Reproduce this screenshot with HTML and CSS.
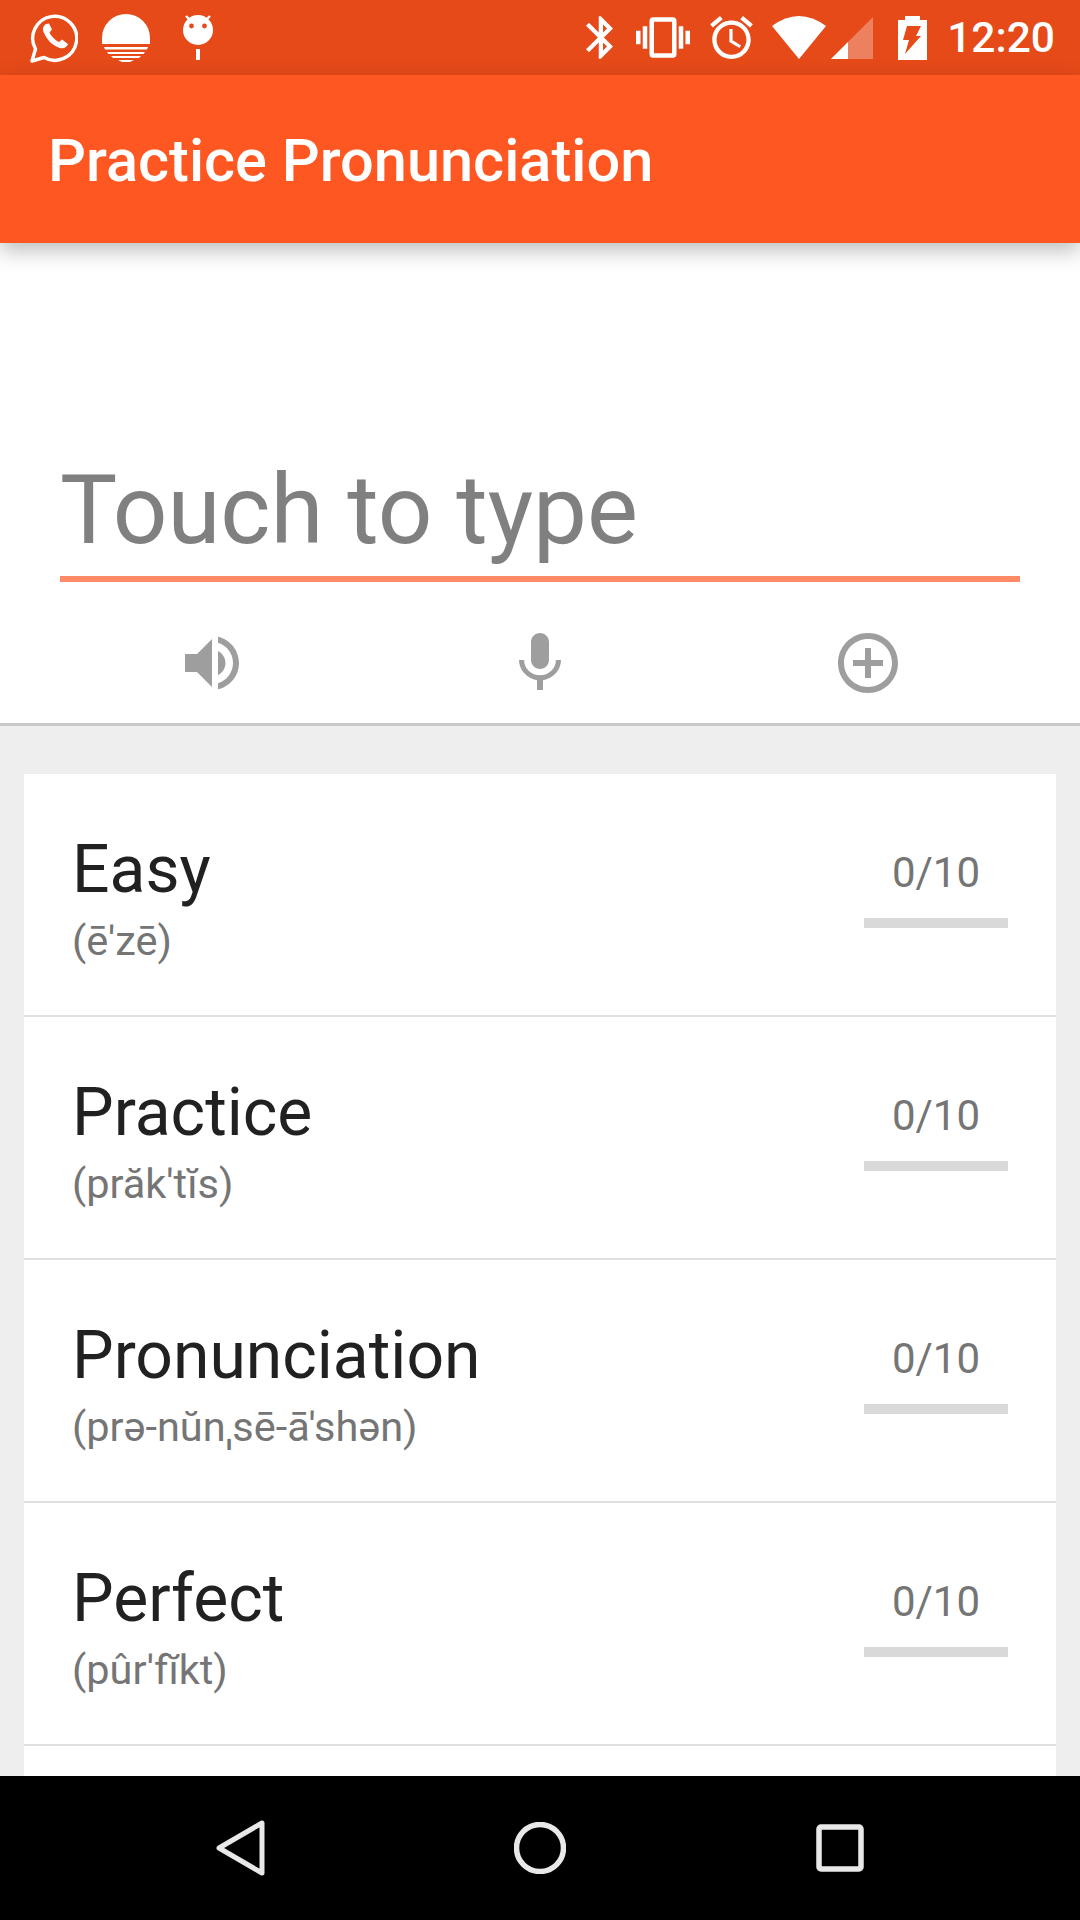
FILE: index.html
```html
<!DOCTYPE html>
<html lang="en">
<head>
<meta charset="utf-8">
<title>Practice Pronunciation</title>
<link rel="stylesheet" href="styles.css">
</head>
<body>
<div class="screen">
  <header class="status">
    <div class="status-left">
      <svg class="ic-wa" viewBox="0 0 48 51"><path d="M2 49 L5.5 37 A22 22 0 1 1 14 45.5 Z" fill="none" stroke="#fff" stroke-width="3.4" stroke-linejoin="round"/><path d="M16 12 C13 14 12 17 14 21 C17 28 23 34 30 36 C34 37 37 35 38 32 L32 27.5 L29 30 C25 28 21 24 19.5 20.5 L22 17.5 L19 11.5 Z" fill="#fff"/></svg>
      <svg class="ic-sun" viewBox="0 0 48 48"><path d="M0 24 A24 24 0 0 1 48 24 V30 H0 Z" fill="#fff"/><path d="M2 33 H46 L45 35.5 H3 Z M5 38 H43 L41.5 40 H6.5 Z M9 42 H39 L37 44 H11 Z M16 46 H32 L28 48 H20 Z" fill="#fff"/></svg>
      <svg class="ic-droid" viewBox="0 0 30 45"><path d="M3 1 L7 5 M27 1 L23 5" stroke="#fff" stroke-width="2.4"/><circle cx="15" cy="15" r="15" fill="#fff"/><circle cx="8.5" cy="11" r="2.4" fill="#e64a19"/><circle cx="21.5" cy="11" r="2.4" fill="#e64a19"/><rect x="13" y="34" width="4" height="11" fill="#fff"/></svg>
    </div>
    <div class="status-right">
      <svg class="ic-bt" viewBox="5 2 12.71 20"><path fill="#fff" d="M17.71 7.71L12 2h-1v7.59L6.41 5 5 6.41 10.59 12 5 17.59 6.41 19 11 14.41V22h1l5.71-5.71-4.3-4.29 4.3-4.29zM13 5.83l1.88 1.88L13 9.59V5.83zm1.88 10.46L13 18.17v-3.76l1.88 1.88z"/></svg>
      <svg class="ic-vib" viewBox="0 3 24 18"><path fill="#fff" d="M0 15h2V9H0v6zm3 2h2V7H3v10zm19-8v6h2V9h-2zm-3 8h2V7h-2v10zM16.5 3h-9C6.67 3 6 3.67 6 4.5v15c0 .83.67 1.5 1.5 1.5h9c.83 0 1.5-.67 1.5-1.5v-15c0-.83-.67-1.5-1.5-1.5zM16 19H8V5h8v14z"/></svg>
      <svg class="ic-alarm" viewBox="2 1.86 20 20.14"><path fill="#fff" d="M22 5.72l-4.6-3.86-1.29 1.53 4.6 3.86L22 5.72zM7.88 3.39L6.6 1.86 2 5.71l1.29 1.53 4.59-3.85zM12.5 8H11v6l4.75 2.85.75-1.23-4-2.37V8zM12 4c-4.97 0-9 4.03-9 9s4.03 9 9 9 9-4.03 9-9-4.03-9-9-9zm0 16c-3.87 0-7-3.13-7-7s3.13-7 7-7 7 3.13 7 7-3.13 7-7 7z"/></svg>
      <svg class="ic-wifi" viewBox="0 0 54 43"><path fill="#fff" d="M0 10 Q27 -10 54 10 L27 43 Z"/></svg>
      <svg class="ic-sig" viewBox="0 0 42 42"><path fill="#fff" fill-opacity=".3" d="M0 42 L42 0 V42 Z"/><path fill="#fff" d="M0 42 L17 25 V42 Z"/></svg>
      <svg class="ic-bat" viewBox="0 0 29 44"><path fill="#fff" d="M7 0 H22 V4 H29 V44 H0 V4 H7 Z"/><path fill="#e64a19" d="M9 10 H23 L18 20 H23 L7 38 L11 24 H5 Z"/></svg>
      <span class="clock">12:20</span>
    </div>
  </header>
  <div class="appbar">Practice Pronunciation</div>
  <section class="input-panel">
    <div class="field">Touch to type</div>
    <div class="tools">
      <div class="tool"><svg class="tool-ic" viewBox="0 0 24 24"><path d="M3 9v6h4l5 5V4L7 9H3zm13.5 3c0-1.77-1.02-3.29-2.5-4.03v8.05c1.48-.73 2.5-2.25 2.5-4.02zM14 3.23v2.06c2.89.86 5 3.54 5 6.71s-2.11 5.85-5 6.71v2.06c4.01-.91 7-4.49 7-8.77s-2.99-7.86-7-8.77z"/></svg></div>
      <div class="tool"><svg class="tool-ic" viewBox="0 0 24 24"><path d="M12 14c1.66 0 2.99-1.34 2.99-3L15 5c0-1.66-1.34-3-3-3S9 3.34 9 5v6c0 1.66 1.34 3 3 3zm5.3-3c0 3-2.54 5.1-5.3 5.1S6.7 14 6.7 11H5c0 3.41 2.72 6.23 6 6.72V21h2v-3.28c3.28-.48 6-3.3 6-6.72h-1.7z"/></svg></div>
      <div class="tool"><svg class="tool-ic" viewBox="0 0 24 24"><path d="M13 7h-2v4H7v2h4v4h2v-4h4v-2h-4V7zm-1-5C6.48 2 2 6.48 2 12s4.48 10 10 10 10-4.48 10-10S17.52 2 12 2zm0 18c-4.41 0-8-3.59-8-8s3.59-8 8-8 8 3.59 8 8-3.59 8-8 8z"/></svg></div>
    </div>
  </section>
  <main class="content">
    <div class="card">
      <div class="row"><div class="words"><div class="word">Easy</div><div class="phon">(ē'zē)</div></div><div class="score"><div class="num">0/10</div><div class="bar"></div></div></div>
      <div class="row"><div class="words"><div class="word">Practice</div><div class="phon">(prăk'tĭs)</div></div><div class="score"><div class="num">0/10</div><div class="bar"></div></div></div>
      <div class="row"><div class="words"><div class="word">Pronunciation</div><div class="phon">(prə-nŭnˌsē-ā'shən)</div></div><div class="score"><div class="num">0/10</div><div class="bar"></div></div></div>
      <div class="row"><div class="words"><div class="word">Perfect</div><div class="phon">(pûr'fĭkt)</div></div><div class="score"><div class="num">0/10</div><div class="bar"></div></div></div>
      <div class="row"></div>
    </div>
  </main>
  <nav class="navbar">
    <svg class="nav-back" viewBox="0 0 49 56"><path d="M46 3 V53 L3 28 Z" fill="none" stroke="#e8e8e8" stroke-width="5" stroke-linejoin="round"/></svg>
    <svg class="nav-home" viewBox="0 0 52 52"><circle cx="26" cy="26" r="23.5" fill="none" stroke="#e8e8e8" stroke-width="5.5"/></svg>
    <svg class="nav-rec" viewBox="0 0 48 48"><rect x="3" y="3" width="42" height="42" rx="2" fill="none" stroke="#e8e8e8" stroke-width="5.5"/></svg>
  </nav>
</div>
</body>
</html>
```
FILE: styles.css
```css
* { box-sizing: border-box; }
html, body { margin: 0; padding: 0; }
body { font-family: Roboto, "Noto Sans", sans-serif; background: #eee; }
.screen { width: 1080px; height: 1920px; display: flex; flex-direction: column; overflow: hidden; }

.status { flex: none; height: 75px; background: #e64a19; display: flex; justify-content: space-between; align-items: center; padding: 0 25px 0 30px; color: #fff; }
.status-left, .status-right { display: flex; align-items: center; }
.status svg { display: block; flex: none; }
.ic-wa { width: 48px; height: 51px; }
.ic-sun { width: 48px; height: 48px; margin-left: 24px; }
.ic-droid { width: 30px; height: 45px; margin-left: 33px; }
.ic-bt { width: 27px; height: 43px; }
.ic-vib { width: 54px; height: 41px; margin-left: 23px; }
.ic-alarm { width: 43px; height: 43px; margin-left: 20px; }
.ic-wifi { width: 54px; height: 43px; margin-left: 19px; }
.ic-sig { width: 42px; height: 42px; margin-left: 5px; }
.ic-bat { width: 29px; height: 44px; margin-left: 25px; }
.clock { font-size: 42.5px; font-weight: 500; margin-left: 20px; padding-top: 2px; line-height: 1; }

.appbar { flex: none; height: 168px; background: #ff5722; color: #fff; font-size: 59.5px; font-weight: 500; display: flex; align-items: center; padding: 4px 0 0 48px; box-shadow: 0 8px 20px rgba(0,0,0,.25); position: relative; z-index: 1; }

.input-panel { flex: none; height: 483px; background: #fff; border-bottom: 3px solid #c8c8c8; display: flex; flex-direction: column; justify-content: flex-end; }
.field { margin: 0 60px; height: 100px; border-bottom: 6px solid #ff8a65; font-size: 96px; line-height: 56px; color: #808080; }
.tools { display: grid; grid-template-columns: repeat(3, 1fr); padding: 45px 48px 24px; }
.tool { display: flex; justify-content: center; }
.tool-ic { width: 72px; height: 72px; fill: #9e9e9e; display: block; }

.content { flex: 1; min-height: 0; padding: 48px 24px 0; overflow: hidden; }
.card { background: #fff; }
.row { height: 243px; border-bottom: 2px solid #e0e0e0; padding: 0 48px; display: flex; justify-content: space-between; align-items: center; }
.words { padding-top: 7px; }
.word { font-size: 66px; line-height: 78px; color: #212121; }
.phon { font-size: 41.5px; line-height: 50px; margin-top: 7px; color: #757575; }
.score { width: 144px; display: flex; flex-direction: column; align-items: center; margin-bottom: 14px; }
.num { font-size: 42px; line-height: 50px; color: #757575; }
.bar { width: 100%; height: 10px; margin-top: 20px; background: #d9d9d9; }

.navbar { flex: none; height: 144px; background: #000; display: flex; justify-content: center; align-items: center; gap: 249px; }
.nav-back { width: 49px; height: 56px; display: block; }
.nav-home { width: 52px; height: 52px; display: block; }
.nav-rec { width: 48px; height: 48px; margin-left: 1px; display: block; }
```
